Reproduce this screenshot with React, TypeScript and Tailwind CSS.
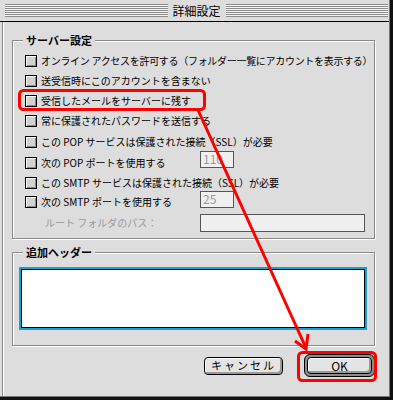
import React from "react";

const font = "font-['Noto_Sans_CJK_JP','Noto_Sans_CJK_SC',sans-serif]";

type Row = {
  h: string;
  label: string;
  tight?: boolean;
  field?: string;
  fieldMb?: string;
};

const rows: Row[] = [
  { h: "h-[20px]", label: "オンライン アクセスを許可する（フォルダー一覧にアカウントを表示する）", tight: true },
  { h: "h-[20px]", label: "送受信時にこのアカウントを含まない" },
  { h: "h-[20px]", label: "受信したメールをサーバーに残す" },
  { h: "h-[20px]", label: "常に保護されたパスワードを送信する" },
  { h: "h-[22px]", label: "この POP サービスは保護された接続（SSL）が必要" },
  { h: "h-[20px]", label: "次の POP ポートを使用する", field: "110", fieldMb: "mb-[8px]" },
  { h: "h-[20px]", label: "この SMTP サービスは保護された接続（SSL）が必要" },
  { h: "h-[18px]", label: "次の SMTP ポートを使用する", field: "25", fieldMb: "mb-[6px]" },
];

function Checkbox() {
  return (
    <div className="w-[12px] h-[12px] shrink-0 border border-black bg-[#d2d2d2] shadow-[inset_1px_1px_0_#fff,inset_-1px_-1px_0_#8a8a8a]" />
  );
}

function Stripes() {
  return (
    <div className="flex-1 h-[13px] bg-[repeating-linear-gradient(to_bottom,#8c8c8c_0px,#8c8c8c_1px,#f4f4f4_1px,#f4f4f4_2px)]" />
  );
}

export default function App() {
  return (
    <div className={`relative w-[393px] h-[400px] bg-[#dddddd] border-r-[3px] border-b-[3px] border-[#111] overflow-hidden text-black ${font}`}>
      <div className="flex flex-col h-full border-r border-b border-[#777]">
        {/* title bar */}
        <div className="h-[22px] shrink-0 flex items-center pl-[5px] pr-[1px] border-b border-black bg-[#dddddd]">
          <Stripes />
          <span className="px-[5px] text-[12px] leading-none">詳細設定</span>
          <Stripes />
        </div>

        {/* body */}
        <div className="flex-1 flex flex-col ml-[2px] pl-[9px] border-l border-[#888] shadow-[inset_1px_0_0_#fff]">
          {/* server settings */}
          <div className="relative mt-[18px] w-[363px] h-[199px] border border-[#8a8a8a] shadow-[1px_1px_0_#fff,inset_1px_1px_0_#fff] pt-[10px] pl-[12px]">
            <span className="absolute -top-[8px] left-[10px] px-[3px] bg-[#dddddd] text-[11px] font-bold leading-[14px]">
              サーバー設定
            </span>
            {rows.map((r) => (
              <div key={r.label} className={`flex items-center ${r.h}`}>
                <div className={`flex items-center gap-[4px] ${r.field ? "w-[175px] shrink-0" : ""}`}>
                  <Checkbox />
                  <span className={`text-[10px] leading-none whitespace-nowrap ${r.tight ? "tracking-[-0.3px]" : ""}`}>
                    {r.label}
                  </span>
                </div>
                {r.field && (
                  <div className={`w-[34px] h-[17px] ${r.fieldMb} border border-[#555] bg-[#f0f0f0] flex items-center pl-[2px] text-[12px] leading-none text-[#999]`}>
                    {r.field}
                  </div>
                )}
              </div>
            ))}
            <div className="flex items-center h-[24px]">
              <div className="w-[175px] shrink-0 pl-[20px] text-[10px] leading-none text-[#999]">
                ルート フォルダのパス：
              </div>
              <div className="w-[165px] h-[18px] border border-[#555] bg-[#f0f0f0]" />
            </div>
          </div>

          {/* extra headers */}
          <div className="relative mt-[13px] w-[363px] h-[94px] border border-[#8a8a8a] shadow-[1px_1px_0_#fff,inset_1px_1px_0_#fff] pt-[14px] pl-[6px]">
            <span className="absolute -top-[8px] left-[10px] px-[3px] bg-[#dddddd] text-[11px] font-bold leading-[14px]">
              追加ヘッダー
            </span>
            <div className="w-[348px] h-[63px] border-2 border-[#1b9fd2] flex">
              <div className="flex-1 border border-black bg-white" />
            </div>
          </div>

          {/* buttons */}
          <div className="mt-[8px] flex items-center justify-end gap-[21px] pr-[14px]">
            <button className="w-[79px] h-[18px] rounded-[4px] border border-black bg-[#e4e4e4] shadow-[inset_1px_1px_0_#fff,inset_-2px_-2px_0_#9a9a9a] text-[11px] leading-none tracking-[2px] flex items-center justify-center">
              キャンセル
            </button>
            <div className="w-[71px] h-[23px] rounded-[6px] border border-black bg-[#8c8c8c] p-[2px] flex">
              <button className="flex-1 rounded-[4px] border border-black bg-[#e4e4e4] shadow-[inset_1px_1px_0_#fff,inset_-2px_-2px_0_#9a9a9a] text-[12px] leading-none flex items-center justify-center">
                OK
              </button>
            </div>
          </div>
        </div>
      </div>

      {/* annotation overlay */}
      <svg className="absolute left-0 top-0 pointer-events-none" width="393" height="400" viewBox="0 0 393 400">
        <rect x="19.5" y="90.5" width="185" height="19" rx="4" fill="none" stroke="#f00" strokeWidth="3" />
        <rect x="298.5" y="352.5" width="77" height="28" rx="4" fill="none" stroke="#f00" strokeWidth="3" />
        <line x1="198" y1="110" x2="306" y2="348" stroke="#f00" strokeWidth="3" />
        <polyline points="295,341 306,349 308,334" fill="none" stroke="#f00" strokeWidth="3" />
      </svg>
    </div>
  );
}
